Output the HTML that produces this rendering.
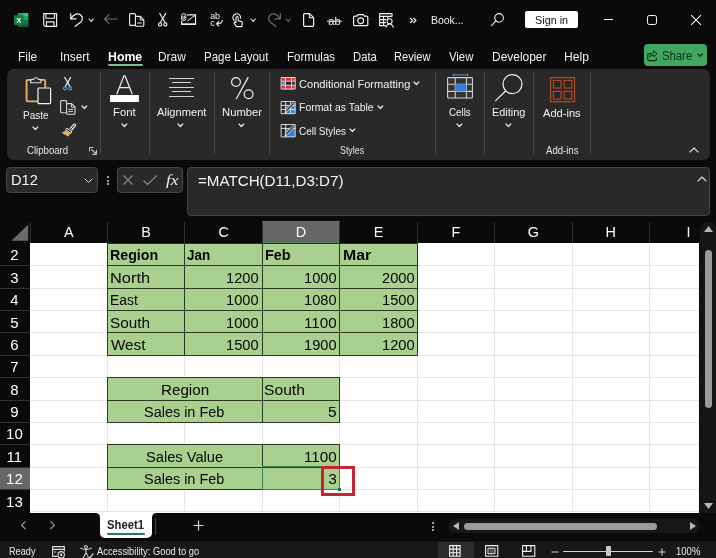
<!DOCTYPE html>
<html lang="en">
<head>
<meta charset="utf-8">
<title>Book1 - Excel</title>
<style>
html,body{margin:0;padding:0;background:#0a0a0a;}
body{width:716px;height:558px;overflow:hidden;position:relative;font-family:"Liberation Sans",sans-serif;}
#root{position:absolute;left:0;top:0;width:716px;height:558px;overflow:hidden;background:#0a0a0a;will-change:transform;}
#root div,#root svg,#root span{position:absolute;}
#root div{box-sizing:border-box;}
.t{white-space:nowrap;line-height:1;transform-origin:0 50%;display:block;}
.c{white-space:nowrap;line-height:1;display:block;}
.s{font-family:"Liberation Serif",serif;font-style:italic;}
svg{overflow:visible;}
</style>
</head>
<body>
<div id="root">
<span id="t1" class="t " style="left:430.50px;top:14.01px;font-size:11.6px;color:#f0f0f0;transform:scaleX(0.9008);">Book...</span>
<div style="left:524.5px;top:11.3px;width:53px;height:17.1px;background:#ffffff;border-radius:2px;"></div>
<span id="t2" class="t " style="left:535.07px;top:14.01px;font-size:11.6px;color:#111;transform:scaleX(0.9340);">Sign in</span>
<span id="t3" class="t " style="left:18.29px;top:51.00px;font-size:12.2px;color:#f2f2f2;transform:scaleX(0.9780);">File</span>
<span id="t4" class="t " style="left:60.24px;top:51.00px;font-size:12.2px;color:#f2f2f2;transform:scaleX(0.9686);">Insert</span>
<span id="t5" class="t " style="left:157.88px;top:51.00px;font-size:12.2px;color:#f2f2f2;transform:scaleX(0.9772);">Draw</span>
<span id="t6" class="t " style="left:204.10px;top:51.00px;font-size:12.2px;color:#f2f2f2;transform:scaleX(0.9414);">Page Layout</span>
<span id="t7" class="t " style="left:286.98px;top:51.00px;font-size:12.2px;color:#f2f2f2;transform:scaleX(0.9476);">Formulas</span>
<span id="t8" class="t " style="left:352.60px;top:51.00px;font-size:12.2px;color:#f2f2f2;transform:scaleX(0.9270);">Data</span>
<span id="t9" class="t " style="left:394.49px;top:51.00px;font-size:12.2px;color:#f2f2f2;transform:scaleX(0.9109);">Review</span>
<span id="t10" class="t " style="left:448.81px;top:51.00px;font-size:12.2px;color:#f2f2f2;transform:scaleX(0.9300);">View</span>
<span id="t11" class="t " style="left:491.60px;top:51.00px;font-size:12.2px;color:#f2f2f2;transform:scaleX(0.9800);">Developer</span>
<span id="t12" class="t " style="left:564.49px;top:51.00px;font-size:12.2px;color:#f2f2f2;transform:scaleX(0.9965);">Help</span>
<span id="t13" class="t " style="left:107.50px;top:51.00px;font-size:12.2px;color:#ffffff;font-weight:700;transform:scaleX(1.0096);">Home</span>
<div style="left:108.3px;top:64px;width:34.3px;height:1.9px;background:#7cbf98;border-radius:1px;"></div>
<div style="left:643.6px;top:44.1px;width:63.1px;height:21.8px;background:#42a660;border-radius:4px;"></div>
<span id="t14" class="t " style="left:661.76px;top:50.00px;font-size:12.2px;color:#0f2f1a;transform:scaleX(0.9276);">Share</span>
<div style="left:6.8px;top:68.9px;width:703.2px;height:90.7px;background:#292929;border-radius:7px;"></div>
<div style="left:99.5px;top:73.2px;width:1px;height:81.2px;background:#484848;"></div>
<div style="left:149.1px;top:73.2px;width:1px;height:81.2px;background:#484848;"></div>
<div style="left:213.9px;top:73.2px;width:1px;height:81.2px;background:#484848;"></div>
<div style="left:269px;top:73.2px;width:1px;height:81.2px;background:#484848;"></div>
<div style="left:434.9px;top:73.2px;width:1px;height:81.2px;background:#484848;"></div>
<div style="left:483.5px;top:73.2px;width:1px;height:81.2px;background:#484848;"></div>
<div style="left:533px;top:73.2px;width:1px;height:81.2px;background:#484848;"></div>
<div style="left:590px;top:73.2px;width:1px;height:81.2px;background:#484848;"></div>
<span id="t15" class="t " style="left:23.40px;top:110.00px;font-size:11.5px;color:#f2f2f2;transform:scaleX(0.8660);">Paste</span>
<span id="t16" class="t " style="left:113.12px;top:107.00px;font-size:11.5px;color:#f2f2f2;transform:scaleX(0.9829);">Font</span>
<span id="t17" class="t " style="left:157.00px;top:107.00px;font-size:11.5px;color:#f2f2f2;transform:scaleX(0.9672);">Alignment</span>
<span id="t18" class="t " style="left:222.00px;top:107.00px;font-size:11.5px;color:#f2f2f2;transform:scaleX(0.9784);">Number</span>
<span id="t19" class="t " style="left:448.65px;top:107.00px;font-size:11.5px;color:#f2f2f2;transform:scaleX(0.8508);">Cells</span>
<span id="t20" class="t " style="left:492.29px;top:107.00px;font-size:11.5px;color:#f2f2f2;transform:scaleX(0.9469);">Editing</span>
<span id="t21" class="t " style="left:542.81px;top:108.00px;font-size:11.5px;color:#f2f2f2;transform:scaleX(0.9648);">Add-ins</span>
<span id="t22" class="t " style="left:298.62px;top:79.00px;font-size:11.5px;color:#f2f2f2;transform:scaleX(0.9621);">Conditional Formatting</span>
<span id="t23" class="t " style="left:298.80px;top:102.00px;font-size:11.5px;color:#f2f2f2;transform:scaleX(0.9081);">Format as Table</span>
<span id="t24" class="t " style="left:298.65px;top:126.00px;font-size:11.5px;color:#f2f2f2;transform:scaleX(0.8632);">Cell Styles</span>
<span id="t25" class="t " style="left:26.95px;top:145.00px;font-size:10.5px;color:#e6e6e6;transform:scaleX(0.9153);">Clipboard</span>
<span id="t26" class="t " style="left:340.35px;top:145.00px;font-size:10.5px;color:#e6e6e6;transform:scaleX(0.8430);">Styles</span>
<span id="t27" class="t " style="left:545.54px;top:145.00px;font-size:10.5px;color:#e6e6e6;transform:scaleX(0.9113);">Add-ins</span>
<svg style="left:31.2px;top:124.95px;" width="8.8" height="6.5" viewBox="-4.4 -3.25 8.8 6.5"><path d="M-2.4 -1.25L0 1.25L2.4 -1.25" fill="none" stroke="#e8e8e8" stroke-width="1.2" stroke-linecap="round" stroke-linejoin="round"/></svg>
<svg style="left:80.2px;top:104.05px;" width="8.8" height="6.5" viewBox="-4.4 -3.25 8.8 6.5"><path d="M-2.4 -1.25L0 1.25L2.4 -1.25" fill="none" stroke="#e8e8e8" stroke-width="1.2" stroke-linecap="round" stroke-linejoin="round"/></svg>
<svg style="left:120px;top:122.45px;" width="8.8" height="6.5" viewBox="-4.4 -3.25 8.8 6.5"><path d="M-2.4 -1.25L0 1.25L2.4 -1.25" fill="none" stroke="#e8e8e8" stroke-width="1.2" stroke-linecap="round" stroke-linejoin="round"/></svg>
<svg style="left:176.4px;top:122.45px;" width="8.8" height="6.5" viewBox="-4.4 -3.25 8.8 6.5"><path d="M-2.4 -1.25L0 1.25L2.4 -1.25" fill="none" stroke="#e8e8e8" stroke-width="1.2" stroke-linecap="round" stroke-linejoin="round"/></svg>
<svg style="left:237.2px;top:122.45px;" width="8.8" height="6.5" viewBox="-4.4 -3.25 8.8 6.5"><path d="M-2.4 -1.25L0 1.25L2.4 -1.25" fill="none" stroke="#e8e8e8" stroke-width="1.2" stroke-linecap="round" stroke-linejoin="round"/></svg>
<svg style="left:455.1px;top:122.45px;" width="8.8" height="6.5" viewBox="-4.4 -3.25 8.8 6.5"><path d="M-2.4 -1.25L0 1.25L2.4 -1.25" fill="none" stroke="#e8e8e8" stroke-width="1.2" stroke-linecap="round" stroke-linejoin="round"/></svg>
<svg style="left:503.9px;top:122.45px;" width="8.8" height="6.5" viewBox="-4.4 -3.25 8.8 6.5"><path d="M-2.4 -1.25L0 1.25L2.4 -1.25" fill="none" stroke="#e8e8e8" stroke-width="1.2" stroke-linecap="round" stroke-linejoin="round"/></svg>
<svg style="left:412.1px;top:80.45px;" width="8.8" height="6.5" viewBox="-4.4 -3.25 8.8 6.5"><path d="M-2.4 -1.25L0 1.25L2.4 -1.25" fill="none" stroke="#e8e8e8" stroke-width="1.2" stroke-linecap="round" stroke-linejoin="round"/></svg>
<svg style="left:375.9px;top:103.85px;" width="8.8" height="6.5" viewBox="-4.4 -3.25 8.8 6.5"><path d="M-2.4 -1.25L0 1.25L2.4 -1.25" fill="none" stroke="#e8e8e8" stroke-width="1.2" stroke-linecap="round" stroke-linejoin="round"/></svg>
<svg style="left:348.1px;top:127.45px;" width="8.8" height="6.5" viewBox="-4.4 -3.25 8.8 6.5"><path d="M-2.4 -1.25L0 1.25L2.4 -1.25" fill="none" stroke="#e8e8e8" stroke-width="1.2" stroke-linecap="round" stroke-linejoin="round"/></svg>
<svg style="left:688.4px;top:146.2px;" width="12" height="8" viewBox="-6 -4 12 8"><path d="M-4 2L0 -2L4 2" fill="none" stroke="#dcdcdc" stroke-width="1.1" stroke-linecap="round" stroke-linejoin="round"/></svg>
<div style="left:6.3px;top:167px;width:92.2px;height:26px;background:#292929;border:1px solid #454545;border-radius:4px;"></div>
<span id="t28" class="t " style="left:11.13px;top:172.01px;font-size:15.2px;color:#f5f5f5;transform:scaleX(0.9645);">D12</span>
<svg style="left:83.2px;top:177.15px;" width="11" height="7.5" viewBox="-5.5 -3.75 11 7.5"><path d="M-3.5 -1.75L0 1.75L3.5 -1.75" fill="none" stroke="#e0e0e0" stroke-width="1.0" stroke-linecap="round" stroke-linejoin="round"/></svg>
<div style="left:106.6px;top:176px;width:2px;height:2px;background:#d0d0d0;border-radius:1px;"></div>
<div style="left:106.6px;top:179.5px;width:2px;height:2px;background:#d0d0d0;border-radius:1px;"></div>
<div style="left:106.6px;top:183px;width:2px;height:2px;background:#d0d0d0;border-radius:1px;"></div>
<div style="left:116.5px;top:167px;width:66.5px;height:26px;background:#292929;border:1px solid #454545;border-radius:4px;"></div>
<svg style="left:123px;top:175px;" width="10" height="10" viewBox="0 0 10 10"><path d="M0.5 0.5L9.5 9.5M9.5 0.5L0.5 9.5" stroke="#8c8c8c" stroke-width="1.1" fill="none"/></svg>
<svg style="left:142.8px;top:175px;" width="14.5" height="10" viewBox="0 0 14.5 10"><path d="M0.5 5.5L4.5 9.5L14 0.5" stroke="#8c8c8c" stroke-width="1.1" fill="none"/></svg>
<span id="t29" class="t s" style="left:165.73px;top:172.00px;font-size:15.5px;color:#f0f0f0;transform:scaleX(1.1148);">fx</span>
<div style="left:186.8px;top:167px;width:523.2px;height:48.5px;background:#292929;border:1px solid #454545;border-radius:4px;"></div>
<span id="t30" class="t " style="left:197.90px;top:173.01px;font-size:15.2px;color:#f5f5f5;transform:scaleX(0.9972);">=MATCH(D11,D3:D7)</span>
<svg style="left:695.5px;top:174.6px;" width="12" height="8" viewBox="-6 -4 12 8"><path d="M-4 2L0 -2L4 2" fill="none" stroke="#dcdcdc" stroke-width="1.1" stroke-linecap="round" stroke-linejoin="round"/></svg>
<div style="left:30px;top:243px;width:669.3px;height:269.6px;background:#ffffff;"></div>
<div style="left:106.94px;top:243px;width:1px;height:269.6px;background:#e6e6e6;"></div>
<div style="left:184.38px;top:243px;width:1px;height:269.6px;background:#e6e6e6;"></div>
<div style="left:261.82px;top:243px;width:1px;height:269.6px;background:#e6e6e6;"></div>
<div style="left:339.26px;top:243px;width:1px;height:269.6px;background:#e6e6e6;"></div>
<div style="left:416.7px;top:243px;width:1px;height:269.6px;background:#e6e6e6;"></div>
<div style="left:494.14px;top:243px;width:1px;height:269.6px;background:#e6e6e6;"></div>
<div style="left:571.58px;top:243px;width:1px;height:269.6px;background:#e6e6e6;"></div>
<div style="left:649.02px;top:243px;width:1px;height:269.6px;background:#e6e6e6;"></div>
<div style="left:30px;top:264.5px;width:669.3px;height:1px;background:#e6e6e6;"></div>
<div style="left:30px;top:287.9px;width:669.3px;height:1px;background:#e6e6e6;"></div>
<div style="left:30px;top:310px;width:669.3px;height:1px;background:#e6e6e6;"></div>
<div style="left:30px;top:332.3px;width:669.3px;height:1px;background:#e6e6e6;"></div>
<div style="left:30px;top:354.6px;width:669.3px;height:1px;background:#e6e6e6;"></div>
<div style="left:30px;top:377px;width:669.3px;height:1px;background:#e6e6e6;"></div>
<div style="left:30px;top:399.6px;width:669.3px;height:1px;background:#e6e6e6;"></div>
<div style="left:30px;top:421.7px;width:669.3px;height:1px;background:#e6e6e6;"></div>
<div style="left:30px;top:444.2px;width:669.3px;height:1px;background:#e6e6e6;"></div>
<div style="left:30px;top:466.7px;width:669.3px;height:1px;background:#e6e6e6;"></div>
<div style="left:30px;top:488.7px;width:669.3px;height:1px;background:#e6e6e6;"></div>
<div style="left:30px;top:511.3px;width:669.3px;height:1px;background:#e6e6e6;"></div>
<div style="left:0px;top:221px;width:699.3px;height:22px;background:#0a0a0a;"></div>
<div style="left:262.4px;top:221.2px;width:77.4px;height:21.8px;background:#676767;"></div>
<div style="left:262.4px;top:242px;width:77.4px;height:1px;background:#4f7f5f;"></div>
<div style="left:29.5px;top:221.5px;width:1px;height:21.5px;background:#303030;"></div>
<div style="left:106.94px;top:221.5px;width:1px;height:21.5px;background:#303030;"></div>
<div style="left:184.38px;top:221.5px;width:1px;height:21.5px;background:#303030;"></div>
<div style="left:261.82px;top:221.5px;width:1px;height:21.5px;background:#303030;"></div>
<div style="left:339.26px;top:221.5px;width:1px;height:21.5px;background:#303030;"></div>
<div style="left:416.7px;top:221.5px;width:1px;height:21.5px;background:#303030;"></div>
<div style="left:494.14px;top:221.5px;width:1px;height:21.5px;background:#303030;"></div>
<div style="left:571.58px;top:221.5px;width:1px;height:21.5px;background:#303030;"></div>
<div style="left:649.02px;top:221.5px;width:1px;height:21.5px;background:#303030;"></div>
<svg style="left:10.6px;top:223.8px;" width="17.6" height="17.2" viewBox="0 0 17.6 17.2"><path d="M17.2 0.4V16.8H0.4Z" fill="#6a6a6a"/></svg>
<span id="t31" class="c " style="left:68.72px;top:225.01px;font-size:14.4px;color:#ffffff;transform:translateX(-50%);">A</span>
<span id="t32" class="c " style="left:146.16px;top:225.01px;font-size:14.4px;color:#ffffff;transform:translateX(-50%);">B</span>
<span id="t33" class="c " style="left:223.60px;top:225.01px;font-size:14.4px;color:#ffffff;transform:translateX(-50%);">C</span>
<span id="t34" class="c " style="left:301.04px;top:225.01px;font-size:14.4px;color:#ffffff;transform:translateX(-50%);">D</span>
<span id="t35" class="c " style="left:378.48px;top:225.01px;font-size:14.4px;color:#ffffff;transform:translateX(-50%);">E</span>
<span id="t36" class="c " style="left:455.92px;top:225.01px;font-size:14.4px;color:#ffffff;transform:translateX(-50%);">F</span>
<span id="t37" class="c " style="left:533.36px;top:225.01px;font-size:14.4px;color:#ffffff;transform:translateX(-50%);">G</span>
<span id="t38" class="c " style="left:610.80px;top:225.01px;font-size:14.4px;color:#ffffff;transform:translateX(-50%);">H</span>
<span id="t39" class="c " style="left:688.50px;top:225.01px;font-size:14.4px;color:#ffffff;transform:translateX(-50%);">I</span>
<div style="left:0px;top:243px;width:30px;height:269.6px;background:#0a0a0a;"></div>
<div style="left:0px;top:467.2px;width:29.5px;height:22px;background:#676767;"></div>
<div style="left:28.8px;top:467.2px;width:1px;height:22px;background:#4f7f5f;"></div>
<span id="t40" class="c " style="left:14.40px;top:247.01px;font-size:15px;color:#ffffff;transform:translateX(-50%);">2</span>
<span id="t41" class="c " style="left:14.40px;top:270.01px;font-size:15px;color:#ffffff;transform:translateX(-50%);">3</span>
<span id="t42" class="c " style="left:14.40px;top:292.01px;font-size:15px;color:#ffffff;transform:translateX(-50%);">4</span>
<span id="t43" class="c " style="left:14.40px;top:315.01px;font-size:15px;color:#ffffff;transform:translateX(-50%);">5</span>
<span id="t44" class="c " style="left:14.40px;top:337.01px;font-size:15px;color:#ffffff;transform:translateX(-50%);">6</span>
<span id="t45" class="c " style="left:14.40px;top:359.01px;font-size:15px;color:#ffffff;transform:translateX(-50%);">7</span>
<span id="t46" class="c " style="left:14.40px;top:382.01px;font-size:15px;color:#ffffff;transform:translateX(-50%);">8</span>
<span id="t47" class="c " style="left:14.40px;top:404.01px;font-size:15px;color:#ffffff;transform:translateX(-50%);">9</span>
<span id="t48" class="c " style="left:14.40px;top:426.01px;font-size:15px;color:#ffffff;transform:translateX(-50%);">10</span>
<span id="t49" class="c " style="left:14.40px;top:449.01px;font-size:15px;color:#ffffff;transform:translateX(-50%);">11</span>
<span id="t50" class="c " style="left:14.40px;top:471.01px;font-size:15px;color:#ffffff;transform:translateX(-50%);">12</span>
<span id="t51" class="c " style="left:14.40px;top:494.01px;font-size:15px;color:#ffffff;transform:translateX(-50%);">13</span>
<div style="left:0px;top:264.5px;width:30px;height:1px;background:#333;"></div>
<div style="left:0px;top:287.9px;width:30px;height:1px;background:#333;"></div>
<div style="left:0px;top:310px;width:30px;height:1px;background:#333;"></div>
<div style="left:0px;top:332.3px;width:30px;height:1px;background:#333;"></div>
<div style="left:0px;top:354.6px;width:30px;height:1px;background:#333;"></div>
<div style="left:0px;top:377px;width:30px;height:1px;background:#333;"></div>
<div style="left:0px;top:399.6px;width:30px;height:1px;background:#333;"></div>
<div style="left:0px;top:421.7px;width:30px;height:1px;background:#333;"></div>
<div style="left:0px;top:444.2px;width:30px;height:1px;background:#333;"></div>
<div style="left:0px;top:466.7px;width:30px;height:1px;background:#333;"></div>
<div style="left:0px;top:488.7px;width:30px;height:1px;background:#333;"></div>
<div style="left:107.44px;top:243px;width:309.76px;height:112.1px;background:#a9d08e;"></div>
<div style="left:106.94px;top:242.5px;width:310.76px;height:1px;background:#2b3a20;"></div>
<div style="left:106.94px;top:264.5px;width:310.76px;height:1px;background:#2b3a20;"></div>
<div style="left:106.94px;top:287.9px;width:310.76px;height:1px;background:#2b3a20;"></div>
<div style="left:106.94px;top:310px;width:310.76px;height:1px;background:#2b3a20;"></div>
<div style="left:106.94px;top:332.3px;width:310.76px;height:1px;background:#2b3a20;"></div>
<div style="left:106.94px;top:354.6px;width:310.76px;height:1px;background:#2b3a20;"></div>
<div style="left:106.94px;top:242.5px;width:1px;height:113.1px;background:#2b3a20;"></div>
<div style="left:184.38px;top:242.5px;width:1px;height:113.1px;background:#2b3a20;"></div>
<div style="left:261.82px;top:242.5px;width:1px;height:113.1px;background:#2b3a20;"></div>
<div style="left:339.26px;top:242.5px;width:1px;height:113.1px;background:#2b3a20;"></div>
<div style="left:416.7px;top:242.5px;width:1px;height:113.1px;background:#2b3a20;"></div>
<div style="left:107.44px;top:377.5px;width:232.32px;height:44.7px;background:#a9d08e;"></div>
<div style="left:106.94px;top:377px;width:233.32px;height:1px;background:#2b3a20;"></div>
<div style="left:106.94px;top:399.6px;width:233.32px;height:1px;background:#2b3a20;"></div>
<div style="left:106.94px;top:421.7px;width:233.32px;height:1px;background:#2b3a20;"></div>
<div style="left:106.94px;top:377px;width:1px;height:45.7px;background:#2b3a20;"></div>
<div style="left:261.82px;top:377px;width:1px;height:45.7px;background:#2b3a20;"></div>
<div style="left:339.26px;top:377px;width:1px;height:45.7px;background:#2b3a20;"></div>
<div style="left:107.44px;top:444.7px;width:232.32px;height:44.5px;background:#a9d08e;"></div>
<div style="left:106.94px;top:444.2px;width:233.32px;height:1px;background:#2b3a20;"></div>
<div style="left:106.94px;top:466.7px;width:233.32px;height:1px;background:#2b3a20;"></div>
<div style="left:106.94px;top:488.7px;width:233.32px;height:1px;background:#2b3a20;"></div>
<div style="left:106.94px;top:444.2px;width:1px;height:45.5px;background:#2b3a20;"></div>
<div style="left:261.82px;top:444.2px;width:1px;height:45.5px;background:#2b3a20;"></div>
<div style="left:339.26px;top:444.2px;width:1px;height:45.5px;background:#2b3a20;"></div>
<span id="t52" class="t " style="left:110.20px;top:247.01px;font-size:15px;color:#050505;font-weight:700;transform:scaleX(0.9471);">Region</span>
<span id="t53" class="t " style="left:186.97px;top:247.01px;font-size:15px;color:#050505;font-weight:700;transform:scaleX(0.8931);">Jan</span>
<span id="t54" class="t " style="left:264.80px;top:247.01px;font-size:15px;color:#050505;font-weight:700;transform:scaleX(0.9601);">Feb</span>
<span id="t55" class="t " style="left:342.60px;top:247.01px;font-size:15px;color:#050505;font-weight:700;transform:scaleX(1.0540);">Mar</span>
<span id="t56" class="t " style="left:110.09px;top:270.01px;font-size:15.4px;color:#050505;transform:scaleX(1.0640);">North</span>
<span id="t57" class="t " style="left:110.09px;top:292.01px;font-size:15.4px;color:#050505;transform:scaleX(0.9025);">East</span>
<span id="t58" class="t " style="left:110.11px;top:315.01px;font-size:15.4px;color:#050505;transform:scaleX(0.9954);">South</span>
<span id="t59" class="t " style="left:111.11px;top:337.01px;font-size:15.4px;color:#050505;transform:scaleX(0.9909);">West</span>
<span id="t60" class="t " style="left:226.13px;top:270.01px;font-size:15.4px;color:#050505;transform:scaleX(0.9519);">1200</span>
<span id="t61" class="t " style="left:303.93px;top:270.01px;font-size:15.4px;color:#050505;transform:scaleX(0.9519);">1000</span>
<span id="t62" class="t " style="left:382.16px;top:270.01px;font-size:15.4px;color:#050505;transform:scaleX(0.9522);">2000</span>
<span id="t63" class="t " style="left:226.13px;top:292.01px;font-size:15.4px;color:#050505;transform:scaleX(0.9519);">1000</span>
<span id="t64" class="t " style="left:303.93px;top:292.01px;font-size:15.4px;color:#050505;transform:scaleX(0.9519);">1080</span>
<span id="t65" class="t " style="left:382.04px;top:292.01px;font-size:15.4px;color:#050505;transform:scaleX(0.9563);">1500</span>
<span id="t66" class="t " style="left:226.13px;top:315.01px;font-size:15.4px;color:#050505;transform:scaleX(0.9519);">1000</span>
<span id="t67" class="t " style="left:303.93px;top:315.01px;font-size:15.4px;color:#050505;transform:scaleX(0.9855);">1100</span>
<span id="t68" class="t " style="left:382.04px;top:315.01px;font-size:15.4px;color:#050505;transform:scaleX(0.9563);">1800</span>
<span id="t69" class="t " style="left:226.13px;top:337.01px;font-size:15.4px;color:#050505;transform:scaleX(0.9519);">1500</span>
<span id="t70" class="t " style="left:303.93px;top:337.01px;font-size:15.4px;color:#050505;transform:scaleX(0.9519);">1900</span>
<span id="t71" class="t " style="left:382.04px;top:337.01px;font-size:15.4px;color:#050505;transform:scaleX(0.9563);">1200</span>
<span id="t72" class="t " style="left:160.80px;top:382.01px;font-size:15.4px;color:#050505;transform:scaleX(0.9870);">Region</span>
<span id="t73" class="t " style="left:144.16px;top:404.01px;font-size:15.4px;color:#050505;transform:scaleX(0.9388);">Sales in Feb</span>
<span id="t74" class="t " style="left:146.06px;top:449.01px;font-size:15.4px;color:#050505;transform:scaleX(0.9518);">Sales Value</span>
<span id="t75" class="t " style="left:144.16px;top:471.01px;font-size:15.4px;color:#050505;transform:scaleX(0.9388);">Sales in Feb</span>
<span id="t76" class="t " style="left:264.00px;top:382.01px;font-size:15.4px;color:#050505;transform:scaleX(1.0165);">South</span>
<span id="t77" class="t " style="left:328.12px;top:404.01px;font-size:15.4px;color:#050505;">5</span>
<span id="t78" class="t " style="left:303.93px;top:449.01px;font-size:15.4px;color:#050505;transform:scaleX(0.9855);">1100</span>
<span id="t79" class="t " style="left:328.27px;top:471.01px;font-size:15.4px;color:#050505;">3</span>
<div style="left:261.6px;top:466.4px;width:78.8px;height:23.6px;border:1px solid #3f8258;"></div>
<div style="left:337.7px;top:487.7px;width:3.4px;height:3.2px;background:#1f6b42;"></div>
<div style="left:321.4px;top:466px;width:33.2px;height:29.5px;border:3px solid #c6242e;"></div>
<div style="left:699.6px;top:221.5px;width:18.4px;height:291.1px;background:#151515;border-radius:8px 8px 0 0;"></div>
<div style="left:705px;top:250px;width:7.3px;height:157.5px;background:#9b9b9b;border-radius:3.6px;"></div>
<svg style="left:703.5px;top:226px;" width="9" height="6" viewBox="0 0 9 6"><path d="M4.5 0L9 6H0Z" fill="#b5b5b5"/></svg>
<svg style="left:703.5px;top:503px;" width="9" height="6" viewBox="0 0 9 6"><path d="M4.5 6L9 0H0Z" fill="#b5b5b5"/></svg>
<div style="left:90px;top:511.6px;width:75px;height:9px;background:#ffffff;"></div>
<div style="left:0px;top:512.6px;width:99.5px;height:28.4px;background:#0a0a0a;border-radius:0 4.5px 0 0;"></div>
<div style="left:152.3px;top:512.6px;width:563.7px;height:28.4px;background:#0a0a0a;border-radius:4.5px 0 0 0;"></div>
<div style="left:95px;top:537.5px;width:65px;height:3.5px;background:#0a0a0a;"></div>
<div style="left:99.5px;top:512.6px;width:52.8px;height:25.2px;background:#ffffff;border-radius:0 0 5px 5px;"></div>
<span id="t80" class="t " style="left:107.45px;top:519.00px;font-size:12.2px;color:#222222;font-weight:700;transform:scaleX(0.9266);">Sheet1</span>
<div style="left:107px;top:533px;width:37.5px;height:1.9px;background:#2a7d56;border-radius:1px;"></div>
<div style="left:154.8px;top:518px;width:1px;height:17px;background:#474747;"></div>
<svg style="left:21px;top:521.4px;" width="5" height="8.4" viewBox="0 0 5 8.4"><path d="M4.5 0.3L0.6 4.2L4.5 8.1" stroke="#a8a8a8" stroke-width="1.1" fill="none"/></svg>
<svg style="left:50.3px;top:521.4px;" width="5" height="8.4" viewBox="0 0 5 8.4"><path d="M0.5 0.3L4.4 4.2L0.5 8.1" stroke="#a8a8a8" stroke-width="1.1" fill="none"/></svg>
<svg style="left:193.4px;top:520.1px;" width="11" height="11" viewBox="0 0 11 11"><path d="M5.5 0.5V10.5M0.5 5.5H10.5" stroke="#d8d8d8" stroke-width="1.2" fill="none"/></svg>
<div style="left:432.4px;top:522.2px;width:2px;height:2px;background:#d0d0d0;border-radius:1px;"></div>
<div style="left:432.4px;top:525.8px;width:2px;height:2px;background:#d0d0d0;border-radius:1px;"></div>
<div style="left:432.4px;top:529.4px;width:2px;height:2px;background:#d0d0d0;border-radius:1px;"></div>
<div style="left:448.3px;top:519px;width:251.7px;height:14.2px;background:#171717;border-radius:7px;"></div>
<div style="left:463.8px;top:522.6px;width:193px;height:7px;background:#9b9b9b;border-radius:3.5px;"></div>
<svg style="left:452.7px;top:522.1px;" width="6" height="8" viewBox="0 0 6 8"><path d="M0 4L6 0V8Z" fill="#b5b5b5"/></svg>
<svg style="left:690px;top:522.1px;" width="6" height="8" viewBox="0 0 6 8"><path d="M6 4L0 0V8Z" fill="#b5b5b5"/></svg>
<div style="left:0px;top:540.8px;width:716px;height:17.2px;background:#181818;"></div>
<span id="t81" class="t " style="left:9.00px;top:546.00px;font-size:10.8px;color:#e8e8e8;transform:scaleX(0.8479);">Ready</span>
<span id="t82" class="t " style="left:97.09px;top:546.00px;font-size:10.8px;color:#e8e8e8;transform:scaleX(0.8635);">Accessibility: Good to go</span>
<div style="left:437.6px;top:541.5px;width:36.4px;height:16.5px;background:#2e2e2e;"></div>
<span id="t83" class="t " style="left:676.04px;top:546.00px;font-size:10.8px;color:#e8e8e8;transform:scaleX(0.8821);">100%</span>
<div style="left:563.4px;top:551px;width:89.7px;height:1px;background:#cfcfcf;"></div>
<div style="left:606px;top:546px;width:5.2px;height:10.2px;background:#c9c9c9;border-radius:1px;"></div>
<svg style="left:551.2px;top:547.5px;" width="8" height="8" viewBox="0 0 8 8"><path d="M0.5 4H7.5" stroke="#d0d0d0" stroke-width="1" fill="none"/></svg>
<svg style="left:657.5px;top:547.5px;" width="8" height="8" viewBox="0 0 8 8"><path d="M0.5 4H7.5M4 0.5V7.5" stroke="#d0d0d0" stroke-width="1" fill="none"/></svg>
<svg style="left:13.7px;top:12.6px;" width="14.2" height="13.9" viewBox="0 0 14.2 13.9"><rect x="3.9" y="0" width="10.3" height="13.9" rx="1" fill="#21a366"/><rect x="9" y="0" width="5.2" height="3.5" fill="#33c481"/><rect x="3.9" y="3.5" width="5.1" height="3.5" fill="#107c41"/><rect x="9" y="3.5" width="5.2" height="3.5" fill="#21a366"/><rect x="3.9" y="7" width="5.1" height="3.5" fill="#185c37"/><rect x="9" y="7" width="5.2" height="3.5" fill="#107c41"/><path d="M3.9 10.5H14.2V12.9a1 1 0 0 1-1 1H4.9a1 1 0 0 1-1-1Z" fill="#185c37"/><rect x="0" y="2.2" width="9.4" height="9.8" rx="1" fill="#107c41"/><text x="4.7" y="9.9" font-family="Liberation Sans, sans-serif" font-weight="700" font-size="7.6" fill="#fff" text-anchor="middle">X</text></svg>
<svg style="left:43px;top:12.8px;" width="14.3" height="14" viewBox="0 0 14.3 14"><path d="M0.7 0.6H13.6V13.4H2.3L0.7 11.8Z" fill="none" stroke="#f2f2f2" stroke-width="1.15" stroke-linejoin="round" stroke-linecap="round" /><path d="M2.9 0.8V5.2H11.5V0.8" fill="none" stroke="#f2f2f2" stroke-width="1.1" stroke-linejoin="round" stroke-linecap="round" /><path d="M3.5 13.2V8.9H11V13.2" fill="none" stroke="#f2f2f2" stroke-width="1.1" stroke-linejoin="round" stroke-linecap="round" /></svg>
<svg style="left:69.6px;top:13.3px;" width="13.1" height="13.2" viewBox="0 0 13.1 13.2"><path d="M0.7 0.6V5.8H6" fill="none" stroke="#f2f2f2" stroke-width="1.2" stroke-linejoin="round" stroke-linecap="round" /><path d="M0.9 5.6C3.2 1.4 7.6 -0.4 10.6 2C13 4 12.9 7 10.6 9.2L5.2 13.3" fill="none" stroke="#f2f2f2" stroke-width="1.2" stroke-linejoin="round" stroke-linecap="round" /></svg>
<svg style="left:86.6px;top:16.8px;" width="8.4" height="6.4" viewBox="-4.2 -3.2 8.4 6.4"><path d="M-2.2 -1.2L0 1.2L2.2 -1.2" fill="none" stroke="#e8e8e8" stroke-width="1.1" stroke-linecap="round" stroke-linejoin="round"/></svg>
<svg style="left:103.9px;top:14.3px;" width="13.6" height="10" viewBox="0 0 13.6 10"><path d="M0.6 5H13.2M5 0.6L0.6 5L5 9.4" fill="none" stroke="#6f6f6f" stroke-width="1.1" stroke-linejoin="round" stroke-linecap="round" /></svg>
<svg style="left:129px;top:13px;" width="15.4" height="13.8" viewBox="0 0 15.4 13.8"><path d="M5.6 12.4H1.6a1 1 0 0 1-1-1V1.6a1 1 0 0 1 1-1H5.4a1 1 0 0 1 1 1V2.6" fill="none" stroke="#f2f2f2" stroke-width="1.1" stroke-linejoin="round" stroke-linecap="round" /><path d="M6.4 3.4H11.4L14.8 6.8V12.3a1 1 0 0 1-1 1H7.4a1 1 0 0 1-1-1Z" fill="#0a0a0a" stroke="#f2f2f2" stroke-width="1.1" stroke-linejoin="round" stroke-linecap="round" /><path d="M11.2 3.6V7H14.6" fill="none" stroke="#f2f2f2" stroke-width="1" stroke-linejoin="round" stroke-linecap="round" /><path d="M8.6 10H12.4" fill="none" stroke="#f2f2f2" stroke-width="1.1" stroke-linejoin="round" stroke-linecap="round" /></svg>
<svg style="left:158px;top:13.3px;" width="9.5" height="13.5" viewBox="0 0 9.5 13.5"><path d="M1.71 0.4L7.22 9.67M7.79 0.4L2.28 9.67" fill="none" stroke="#f2f2f2" stroke-width="1.1" stroke-linejoin="round" stroke-linecap="round" /><circle cx="2.12" cy="11.38" r="1.62" fill="none" stroke="#f2f2f2" stroke-width="1.1"/><circle cx="7.38" cy="11.38" r="1.62" fill="none" stroke="#f2f2f2" stroke-width="1.1"/></svg>
<svg style="left:181.3px;top:12.8px;" width="15.1" height="12.3" viewBox="0 0 15.1 12.3"><path d="M6.4 1.9H14.5V11.4H0.7V8" fill="none" stroke="#f2f2f2" stroke-width="1.2" stroke-linejoin="round" stroke-linecap="round" /><path d="M14.2 2.3L6.6 7.7" fill="none" stroke="#f2f2f2" stroke-width="1" stroke-linejoin="round" stroke-linecap="round" /><path d="M0.6 5.6V2.6a2.1 2.1 0 0 1 4.2 0V5.6a2.1 2.1 0 0 1-4.2 0ZM2 3V5.4a0.7 0.7 0 0 0 1.4 0V3" fill="none" stroke="#f2f2f2" stroke-width="0.9" stroke-linejoin="round" stroke-linecap="round" /><path d="M0.7 10.9H14.5" fill="none" stroke="#f2f2f2" stroke-width="1" stroke-linejoin="round" stroke-linecap="round" /></svg>
<svg style="left:209.5px;top:13.3px;" width="12.5" height="13.5" viewBox="0 0 12.5 13.5"><text x="0.2" y="5.9" font-family="Liberation Sans, sans-serif" font-size="8.8" fill="#f2f2f2">ab</text><text x="0.2" y="12.8" font-family="Liberation Sans, sans-serif" font-size="8.8" fill="#f2f2f2">c</text><path d="M12.2 7.2C12.4 10 10.6 10.8 6.6 10.8M8.8 8.5L6.4 10.8L8.8 13" fill="none" stroke="#f2f2f2" stroke-width="1.1" stroke-linejoin="round" stroke-linecap="round" /></svg>
<svg style="left:231.8px;top:12.6px;" width="10.8" height="14.2" viewBox="0 0 10.8 14.2"><path d="M2.2 7.6A3.9 3.9 0 1 1 8.6 5.2" fill="none" stroke="#f2f2f2" stroke-width="1.1" stroke-linejoin="round" stroke-linecap="round" /><path d="M4 9.4V4.6a1.1 1.1 0 0 1 2.2 0V7.8L9.4 8.6a1.2 1.2 0 0 1 0.9 1.3L9.8 13.6H4.6L2.4 10.6a0.9 0.9 0 0 1 1.4-1.2Z" fill="none" stroke="#f2f2f2" stroke-width="1.1" stroke-linejoin="round" stroke-linecap="round" /></svg>
<svg style="left:249.4px;top:16.8px;" width="8.4" height="6.4" viewBox="-4.2 -3.2 8.4 6.4"><path d="M-2.2 -1.2L0 1.2L2.2 -1.2" fill="none" stroke="#e8e8e8" stroke-width="1.1" stroke-linecap="round" stroke-linejoin="round"/></svg>
<svg style="left:268px;top:13.3px;" width="13" height="13.2" viewBox="0 0 13 13.2"><path d="M12.3 0.6V5.8H7" fill="none" stroke="#6f6f6f" stroke-width="1.2" stroke-linejoin="round" stroke-linecap="round" /><path d="M12.1 5.6C9.8 1.4 5.4 -0.4 2.4 2C0 4 0.1 7 2.4 9.2L7.8 13.3" fill="none" stroke="#6f6f6f" stroke-width="1.2" stroke-linejoin="round" stroke-linecap="round" /></svg>
<svg style="left:284.4px;top:16.8px;" width="8.4" height="6.4" viewBox="-4.2 -3.2 8.4 6.4"><path d="M-2.2 -1.2L0 1.2L2.2 -1.2" fill="none" stroke="#6f6f6f" stroke-width="1.1" stroke-linecap="round" stroke-linejoin="round"/></svg>
<svg style="left:303px;top:12.8px;" width="11.2" height="14" viewBox="0 0 11.2 14"><path d="M1.6 0.6H6.6L10.6 4.6V12.4a1 1 0 0 1-1 1H1.6a1 1 0 0 1-1-1V1.6a1 1 0 0 1 1-1Z" fill="none" stroke="#f2f2f2" stroke-width="1.2" stroke-linejoin="round" stroke-linecap="round" /><path d="M6.4 0.8V4.8H10.4" fill="none" stroke="#f2f2f2" stroke-width="1.1" stroke-linejoin="round" stroke-linecap="round" /></svg>
<svg style="left:327.2px;top:15px;" width="14.8" height="11" viewBox="0 0 14.8 11"><text x="7.4" y="9.6" font-family="Liberation Sans, sans-serif" font-size="11" fill="#f2f2f2" text-anchor="middle">ab</text><path d="M0.4 6.2H14.4" fill="none" stroke="#f2f2f2" stroke-width="1" stroke-linejoin="round" stroke-linecap="round" /></svg>
<svg style="left:353px;top:13.5px;" width="15.4" height="12.3" viewBox="0 0 15.4 12.3"><path d="M1.6 2.2H4L5.2 0.6H10.2L11.4 2.2H13.8a1 1 0 0 1 1 1V10.7a1 1 0 0 1-1 1H1.6a1 1 0 0 1-1-1V3.2a1 1 0 0 1 1-1Z" fill="none" stroke="#f2f2f2" stroke-width="1.2" stroke-linejoin="round" stroke-linecap="round" /><circle cx="7.7" cy="6.8" r="2.9" fill="none" stroke="#f2f2f2" stroke-width="1.2"/></svg>
<svg style="left:379.3px;top:12.8px;" width="14.6" height="14.4" viewBox="0 0 14.6 14.4"><path d="M0.6 0.6H13V3M0.6 0.6V12.6H6.4M0.6 3.4H13M0.6 6.6H7M0.6 9.6H6.6M4.6 3.4V12.6M8.8 3.4V5.4" fill="none" stroke="#f2f2f2" stroke-width="1.1" stroke-linejoin="round" stroke-linecap="round" /><circle cx="10.6" cy="8.2" r="2.5" fill="none" stroke="#f2f2f2" stroke-width="1.1"/><path d="M7 14.2C7.6 12 9 11 10.6 11C12.2 11 13.6 12 14.2 14.2" fill="none" stroke="#f2f2f2" stroke-width="1.1" stroke-linejoin="round" stroke-linecap="round" /></svg>
<svg style="left:409.5px;top:17.9px;" width="6.5" height="5" viewBox="0 0 6.5 5"><path d="M0.5 0.5L2.6 2.5L0.5 4.5M3.8 0.5L5.9 2.5L3.8 4.5" fill="none" stroke="#f2f2f2" stroke-width="1.25" stroke-linejoin="round" stroke-linecap="round" /></svg>
<svg style="left:491px;top:13px;" width="13" height="13.2" viewBox="0 0 13 13.2"><circle cx="8.1" cy="4.9" r="4.3" fill="none" stroke="#f2f2f2" stroke-width="1.1"/><path d="M5 8L0.6 12.6" fill="none" stroke="#f2f2f2" stroke-width="1.1" stroke-linejoin="round" stroke-linecap="round" /></svg>
<div style="left:604px;top:19.1px;width:9.2px;height:1.1px;background:#f2f2f2;"></div>
<div style="left:647.3px;top:15px;width:9.5px;height:9.6px;border:1.1px solid #f2f2f2;border-radius:2.2px;"></div>
<svg style="left:690.6px;top:15px;" width="10.1" height="10" viewBox="0 0 10.1 10"><path d="M0.4 0.4L9.7 9.6M9.7 0.4L0.4 9.6" fill="none" stroke="#f2f2f2" stroke-width="1.1" stroke-linejoin="round" stroke-linecap="round" /></svg>
<svg style="left:647.4px;top:50.2px;" width="11" height="11" viewBox="0 0 11 11"><path d="M3.6 3.6H1.8a1 1 0 0 0-1 1V9.6a1 1 0 0 0 1 1H8.4a1 1 0 0 0 1-1V8.4" fill="none" stroke="#0f2f1a" stroke-width="1.1" stroke-linejoin="round" stroke-linecap="round" /><path d="M6.8 0.8L10.2 3.8L6.8 6.8V5C5 5 3.8 5.6 3 7.2C3.2 4.6 4.6 2.8 6.8 2.6Z" fill="none" stroke="#0f2f1a" stroke-width="1" stroke-linejoin="round" stroke-linecap="round" /></svg>
<svg style="left:696px;top:52.4px;" width="8.4" height="6.4" viewBox="-4.2 -3.2 8.4 6.4"><path d="M-2.2 -1.2L0 1.2L2.2 -1.2" fill="none" stroke="#0f2f1a" stroke-width="1.2" stroke-linecap="round" stroke-linejoin="round"/></svg>
<svg style="left:26px;top:77px;" width="25.2" height="27.2" viewBox="0 0 25.2 27.2"><path d="M5 2.9H1.8a1.2 1.2 0 0 0-1.2 1.2V23.2a1.2 1.2 0 0 0 1.2 1.2H11" fill="none" stroke="#e5b25d" stroke-width="1.9" stroke-linejoin="round" stroke-linecap="round" /><path d="M14.6 2.9H18a1.2 1.2 0 0 1 1.2 1.2V10" fill="none" stroke="#e5b25d" stroke-width="1.9" stroke-linejoin="round" stroke-linecap="round" /><path d="M4.6 5.8V3.4a1 1 0 0 1 1-1H7.6a2.4 2.4 0 0 1 4.6 0H14a1 1 0 0 1 1 1V5.8Z" fill="none" stroke="#d8d8d8" stroke-width="1.1" stroke-linejoin="round" stroke-linecap="round" /><rect x="12" y="11" width="12.6" height="15.6" rx="0.8" fill="#292929" stroke="#f2f2f2" stroke-width="1.2"/></svg>
<svg style="left:63px;top:77.3px;" width="9.3" height="13.4" viewBox="0 0 9.3 13.4"><path d="M1.67 0.4L7.07 9.64M7.63 0.4L2.23 9.64" fill="none" stroke="#f2f2f2" stroke-width="1.1" stroke-linejoin="round" stroke-linecap="round" /><circle cx="2.08" cy="11.32" r="1.58" fill="none" stroke="#4f9fe0" stroke-width="1.1"/><circle cx="7.22" cy="11.32" r="1.58" fill="none" stroke="#4f9fe0" stroke-width="1.1"/></svg>
<svg style="left:59.7px;top:99.6px;" width="15.6" height="14.7" viewBox="0 0 15.6 14.7"><path d="M5.8 12.8H1.6a1 1 0 0 1-1-1V1.6a1 1 0 0 1 1-1H5.6a1 1 0 0 1 1 1V2.8" fill="none" stroke="#d8d8d8" stroke-width="1.1" stroke-linejoin="round" stroke-linecap="round" /><path d="M6.6 3.6H11.6L15 7V13.2a1 1 0 0 1-1 1H7.6a1 1 0 0 1-1-1Z" fill="#292929" stroke="#d8d8d8" stroke-width="1.1" stroke-linejoin="round" stroke-linecap="round" /><path d="M11.4 3.8V7.2H14.8" fill="none" stroke="#d8d8d8" stroke-width="1" stroke-linejoin="round" stroke-linecap="round" /><path d="M8.8 9.4H12.6M8.8 11.6H12.6" fill="none" stroke="#d8d8d8" stroke-width="1" stroke-linejoin="round" stroke-linecap="round" /></svg>
<svg style="left:60.5px;top:123.2px;" width="14.8" height="13.8" viewBox="0 0 14.8 13.8"><path d="M9.2 5.4L13 1.2a1.1 1.1 0 0 1 1.4 1.6L10.8 7" fill="none" stroke="#f2f2f2" stroke-width="1.2" stroke-linejoin="round" stroke-linecap="round" /><path d="M6.2 5.4L11 8.8L9.8 10.4L5 7Z" fill="none" stroke="#f2f2f2" stroke-width="1" stroke-linejoin="round" stroke-linecap="round" /><path d="M4.6 7.4L9.4 10.8L7 13.6L0.6 9.8Z" fill="#e5b25d"/></svg>
<svg style="left:89.1px;top:146.8px;" width="8.1" height="7.6" viewBox="0 0 8.1 7.6"><path d="M0.5 4V0.5H4" fill="none" stroke="#d0d0d0" stroke-width="1" stroke-linejoin="round" stroke-linecap="round" /><path d="M2.6 2.6L7.2 7M7.4 3.4V7.2H3.6" fill="none" stroke="#d0d0d0" stroke-width="1.1" stroke-linejoin="round" stroke-linecap="round" /></svg>
<svg style="left:110.1px;top:75px;" width="28.9" height="27.2" viewBox="0 0 28.9 27.2"><path d="M6.9 18.8L14 0.8H15L22.1 18.8M9.4 12.6H19.6" fill="none" stroke="#f2f2f2" stroke-width="1.2" stroke-linejoin="round" stroke-linecap="round" /><rect x="0" y="20" width="28.9" height="7" fill="#ffffff"/></svg>
<div style="left:169px;top:77.85px;width:25px;height:1.1px;background:#d6d6d6;"></div>
<div style="left:172.4px;top:82.35px;width:18.6px;height:1.1px;background:#d6d6d6;"></div>
<div style="left:169px;top:86.85px;width:25px;height:1.1px;background:#d6d6d6;"></div>
<div style="left:172.4px;top:91.35px;width:18.6px;height:1.1px;background:#d6d6d6;"></div>
<div style="left:169px;top:95.75px;width:25px;height:1.1px;background:#d6d6d6;"></div>
<svg style="left:230.8px;top:76.8px;" width="22.7" height="22.4" viewBox="0 0 22.7 22.4"><circle cx="5" cy="5" r="4.4" fill="none" stroke="#f2f2f2" stroke-width="1.2"/><circle cx="17.6" cy="17.2" r="4.4" fill="none" stroke="#f2f2f2" stroke-width="1.2"/><path d="M17 0.6L5.4 21.8" fill="none" stroke="#f2f2f2" stroke-width="1.2" stroke-linejoin="round" stroke-linecap="round" /></svg>
<svg style="left:280.9px;top:77.3px;" width="14.7" height="12.6" viewBox="0 0 14.7 12.6"><rect x="0.5" y="0.5" width="13.7" height="11.6" fill="#292929"/><rect x="0.5" y="0.5" width="13.7" height="3.6" fill="#d13438"/><rect x="0.5" y="8.3" width="13.7" height="3.8" fill="#d13438"/><rect x="0.5" y="4.4" width="4" height="3.8" fill="#4f8fd8"/><path d="M0.5 0.5H14.2V12.1H0.5ZM0.5 4.2H14.2M0.5 8.2H14.2M4.4 0.5V12.1M10.6 0.5V12.1" fill="none" stroke="#e6e6e6" stroke-width="0.9" stroke-linejoin="round" stroke-linecap="round" /></svg>
<svg style="left:280.9px;top:100.8px;" width="14.7" height="13.2" viewBox="0 0 14.7 13.2"><rect x="4.6" y="4.6" width="9.6" height="8.1" fill="#3a82d6"/><path d="M0.5 0.5H14.2V12.7H0.5ZM0.5 4.4H14.2M0.5 8.4H14.2M4.6 0.5V12.7M9.6 0.5V12.7" fill="none" stroke="#e6e6e6" stroke-width="0.9" stroke-linejoin="round" stroke-linecap="round" /><path d="M13.2 3.2L6.4 10.2L4 11.8L5 8.6L11.8 1.8Z" fill="#292929" stroke="#f2f2f2" stroke-width="0.9" stroke-linejoin="round" stroke-linecap="round" /></svg>
<svg style="left:280.9px;top:124px;" width="14.7" height="13.4" viewBox="0 0 14.7 13.4"><rect x="4.6" y="4.6" width="9.6" height="8.3" fill="#3a82d6"/><path d="M0.5 0.5H14.2V12.9H0.5ZM0.5 4.4H14.2M4.6 0.5V12.9" fill="none" stroke="#e6e6e6" stroke-width="0.9" stroke-linejoin="round" stroke-linecap="round" /><path d="M13.2 3.2L6.4 10.4L4 12.0L5 8.8L11.8 1.8Z" fill="#292929" stroke="#f2f2f2" stroke-width="0.9" stroke-linejoin="round" stroke-linecap="round" /></svg>
<svg style="left:446.8px;top:73.8px;" width="26.1" height="24.6" viewBox="0 0 26.1 24.6"><rect x="0.6" y="3.6" width="24.9" height="20.4" rx="1" fill="#333" stroke="#d0d0d0" stroke-width="1.1"/><path d="M0.6 10.2H25.5M0.6 17.4H25.5M8.2 3.6V24M19.4 3.6V24" fill="none" stroke="#d0d0d0" stroke-width="1.1" stroke-linejoin="round" stroke-linecap="round" /><rect x="8.2" y="10.2" width="11.2" height="7.2" fill="#2f7fd6"/><path d="M6.4 0.9H20.6M6.4 0V1.9M20.6 0V1.9" fill="none" stroke="#5aa0e6" stroke-width="0.9" stroke-linejoin="round" stroke-linecap="round" /></svg>
<svg style="left:495px;top:74.4px;" width="27.6" height="27.2" viewBox="0 0 27.6 27.2"><circle cx="17.5" cy="10.1" r="9.5" fill="none" stroke="#f2f2f2" stroke-width="1.2"/><path d="M10.6 17L0.6 26.6" fill="none" stroke="#f2f2f2" stroke-width="1.2" stroke-linejoin="round" stroke-linecap="round" /></svg>
<svg style="left:550px;top:76.8px;" width="25.2" height="25.4" viewBox="0 0 25.2 25.4"><rect x="0.6" y="0.6" width="24" height="24.2" fill="#3a2620" stroke="#b9502e" stroke-width="1.05"/><rect x="3.4" y="3.4" width="7.6" height="7.6" fill="#2b2624" stroke="#b9502e" stroke-width="1"/><rect x="3.4" y="14.4" width="7.6" height="7.6" fill="#2b2624" stroke="#b9502e" stroke-width="1"/><rect x="14.2" y="3.4" width="7.6" height="7.6" fill="#2b2624" stroke="#b9502e" stroke-width="1"/><rect x="14.2" y="14.4" width="7.6" height="7.6" fill="#2b2624" stroke="#b9502e" stroke-width="1"/></svg>
<svg style="left:52px;top:546.2px;" width="13" height="11.8" viewBox="0 0 13 11.8"><path d="M0.6 0.6H12.4V5M0.6 0.6V10.4H5M0.6 3.4H12.4" fill="none" stroke="#e0e0e0" stroke-width="1.1" stroke-linejoin="round" stroke-linecap="round" /><circle cx="9.2" cy="8.8" r="3.2" fill="none" stroke="#e0e0e0" stroke-width="1.1"/><circle cx="9.2" cy="8.8" r="1.2" fill="#e0e0e0"/><path d="M2.4 6H4" fill="none" stroke="#e0e0e0" stroke-width="1" stroke-linejoin="round" stroke-linecap="round" /></svg>
<svg style="left:80.4px;top:544.6px;" width="13.6" height="13.4" viewBox="0 0 13.6 13.4"><circle cx="6" cy="2" r="1.5" fill="none" stroke="#e0e0e0" stroke-width="1"/><path d="M0.8 3.2C3 5 9 5 11.2 3.2M6 5V8M6 8L3.4 12.6M6 8L7.4 10" fill="none" stroke="#e0e0e0" stroke-width="1.1" stroke-linejoin="round" stroke-linecap="round" /><path d="M7.6 11.4L9.6 13.2L13 9" fill="none" stroke="#e0e0e0" stroke-width="1.2" stroke-linejoin="round" stroke-linecap="round" /></svg>
<svg style="left:449.3px;top:545.2px;" width="11.7" height="11.8" viewBox="0 0 11.7 11.8"><path d="M0.6 0.6H11.1V11.2H0.6ZM0.6 4.1H11.1M0.6 7.7H11.1M4.1 0.6V11.2M7.6 0.6V11.2" fill="none" stroke="#f2f2f2" stroke-width="1.1" stroke-linejoin="round" stroke-linecap="round" /></svg>
<svg style="left:485.4px;top:545.2px;" width="13.4" height="11.8" viewBox="0 0 13.4 11.8"><path d="M0.6 0.6H12.8V11.2H0.6Z" fill="none" stroke="#f2f2f2" stroke-width="1.1" stroke-linejoin="round" stroke-linecap="round" /><path d="M3.4 3.2H10V8.8H3.4Z" fill="none" stroke="#f2f2f2" stroke-width="1" stroke-linejoin="round" stroke-linecap="round" /><path d="M5 5H8.4M5 7H8.4" fill="none" stroke="#bdbdbd" stroke-width="0.8" stroke-linejoin="round" stroke-linecap="round" /></svg>
<svg style="left:521.9px;top:545.2px;" width="13.4" height="11.8" viewBox="0 0 13.4 11.8"><path d="M0.6 0.6H12.8V11.2H0.6Z" fill="none" stroke="#f2f2f2" stroke-width="1.1" stroke-linejoin="round" stroke-linecap="round" /><path d="M4.4 0.6V6.4H9V0.6M0.6 6.4H4.4" fill="none" stroke="#f2f2f2" stroke-width="1.1" stroke-linejoin="round" stroke-linecap="round" /></svg>
</div>
</body>
</html>
